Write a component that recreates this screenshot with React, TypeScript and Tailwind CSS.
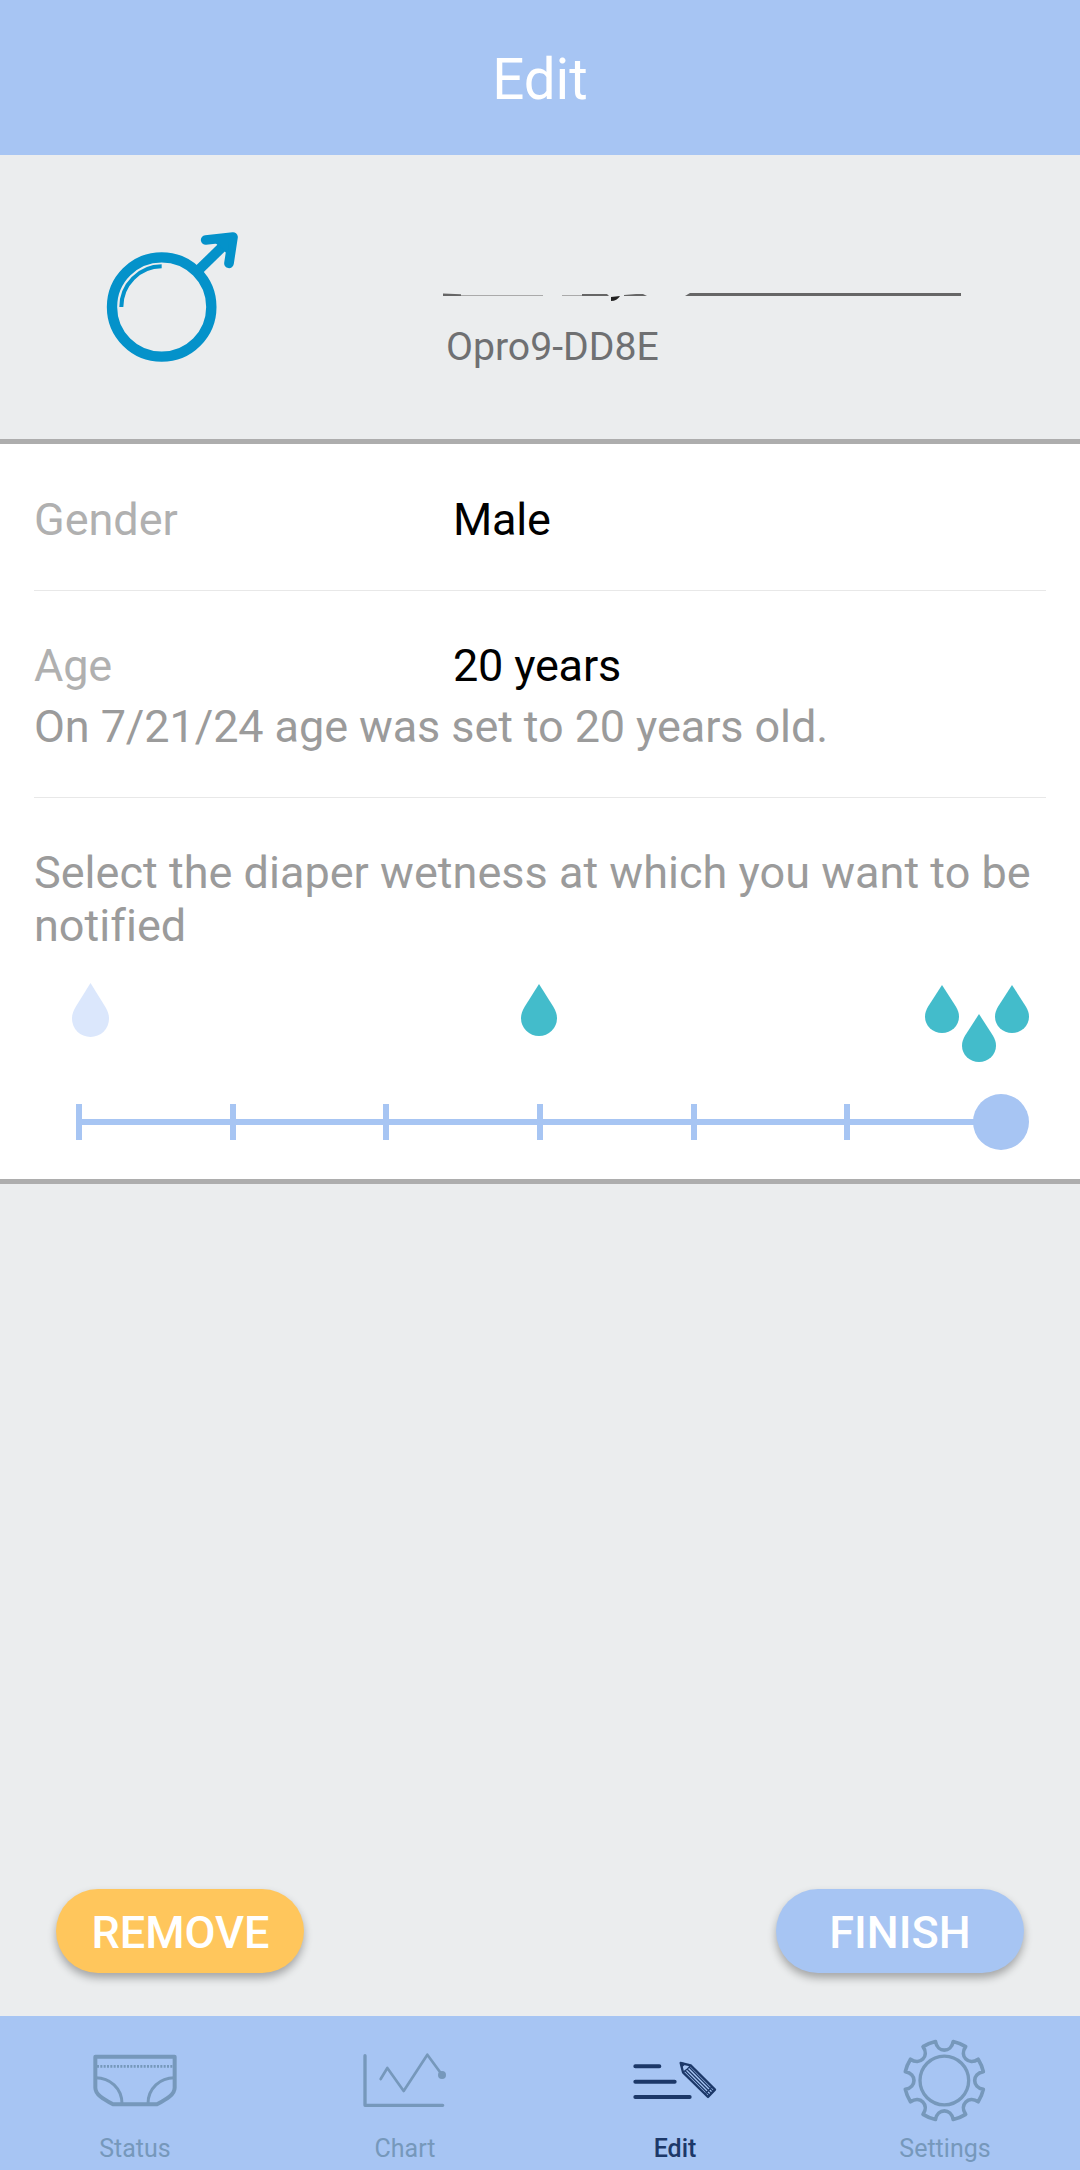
const DROP = "M18 0 L32.5 23.5 C35 28 36 31 36 35 A18 18 0 0 1 0 35 C0 31 1 28 3.5 23.5 Z";

const TICKS = [76, 230, 383, 537, 691, 844];

function gearPath() {
  const cx = 1033;
  const cy = 212.5;
  const r = 120;
  const pt = (deg: number, radius = r) => {
    const a = (deg * Math.PI) / 180;
    return `${(cx + radius * Math.sin(a)).toFixed(1)} ${(cy - radius * Math.cos(a)).toFixed(1)}`;
  };
  let d = `M${pt(12.8)}`;
  for (let i = 1; i <= 8; i++) {
    const mid = i * 45;
    d += ` A${r} ${r} 0 0 1 ${pt(mid - 12.8)}`;
    d += ` C${pt(mid - 14, 85)} ${pt(mid + 14, 85)} ${pt(mid + 12.8)}`;
  }
  return d + " Z";
}

function MaleIcon() {
  return (
    <svg width="140" height="140" viewBox="75 60 420 420" fill="none" stroke="#0492ca">
      <circle cx="245" cy="291" r="149" strokeWidth="31" />
      <path d="M124 291 A122 122 0 0 1 245 169" strokeWidth="12" />
      <path d="M357 179 L440 98" strokeWidth="30" />
      <path d="M377 90 L459 81 L447 160" strokeWidth="29" strokeLinecap="round" strokeLinejoin="round" />
      <path d="M408 98 H443 V130 Z" fill="#0492ca" strokeWidth="4" />
    </svg>
  );
}

function NameLine() {
  return (
    <svg width="520" height="10" viewBox="442 292 520 10" className="mt-[137px]">
      <path d="M443 293.5 L461 294.3 V296 H443 Z" fill="#666" />
      <path d="M461 295 H543 V296 H461 Z M562 295 H582 V296 H562 Z" fill="#aaa" />
      <path d="M582 294 H607 L609 296 H582 Z M624 295 L636 294 H643 L647 296 H624 Z" fill="#666" />
      <path d="M611 297 L620 296 Q617 301 611 301 Z" fill="#222" />
      <path d="M690 293 H961 V296 H685 Z" fill="#666" />
    </svg>
  );
}

function Drop({ className, color }: { className: string; color: string }) {
  return (
    <svg viewBox="0 0 36 53" preserveAspectRatio="none" className={className} fill={color}>
      <path d={DROP} />
    </svg>
  );
}

function WetnessSlider() {
  return (
    <svg width="1080" height="60" viewBox="0 1092 1080 60" fill="#a7c5f3" className="block">
      <rect x="76" y="1119" width="925" height="6" />
      {TICKS.map((x) => (
        <rect key={x} x={x} y="1104" width="6" height="36" />
      ))}
      <circle cx="1001" cy="1122" r="28" />
    </svg>
  );
}

function StatusIcon() {
  return (
    <svg width="84" height="84" viewBox="100 88 252 252" fill="none" stroke="currentColor">
      <path d="M107 141 H345 V234 C345 254 322 268 292 284 H160 C130 268 107 254 107 234 Z" strokeWidth="12" strokeLinejoin="round" />
      <path d="M112 170 H342" strokeWidth="8" strokeDasharray="6 4" />
      <path d="M108 204 C150 204 187 235 187 282 M344 204 C302 204 265 235 265 282" strokeWidth="9" />
    </svg>
  );
}

function ChartIcon() {
  return (
    <svg width="84" height="84" viewBox="910 88 252 252" fill="none" stroke="currentColor" strokeLinecap="round" strokeLinejoin="round">
      <path d="M916 138 V287 H1149" strokeWidth="10" />
      <path d="M963 208 L983 175 L1032 244 L1103 135 L1147 195" strokeWidth="8" />
      <circle cx="1147" cy="196" r="12" fill="currentColor" stroke="none" />
    </svg>
  );
}

function EditIcon() {
  return (
    <svg width="84" height="84" viewBox="100 88 252 252" fill="none" stroke="currentColor" strokeLinecap="round" strokeLinejoin="round">
      <path d="M107 170 H179 M107 216 H225 M107 262 H270" strokeWidth="12" />
      <path d="M243 160 L273 167 L346 240 L325 262 L250 188 Z" strokeWidth="7" />
      <path d="M250 188 L262 179 L273 167 M257 184 L329 256 M263 179 L334 250 M269 173 L340 245 M317 252 L337 231" strokeWidth="4" />
      <path d="M243 160 L255 163 L246 171 Z" strokeWidth="4" fill="currentColor" />
    </svg>
  );
}

function SettingsIcon() {
  return (
    <svg width="84" height="84" viewBox="909 88 252 252" fill="none" stroke="currentColor" strokeLinejoin="round">
      <path d={gearPath()} strokeWidth="11" />
      <circle cx="1033" cy="212.5" r="73" strokeWidth="10" />
    </svg>
  );
}

const tabs = [
  { label: "Status", icon: <StatusIcon /> },
  { label: "Chart", icon: <ChartIcon /> },
  { label: "Edit", icon: <EditIcon />, active: true },
  { label: "Settings", icon: <SettingsIcon /> },
];

export default function App() {
  return (
    <div className="flex h-[2170px] w-[1080px] flex-col overflow-hidden bg-[#ebedee] font-['Roboto',sans-serif] text-[45px] leading-[53px]">
      <header className="flex h-[155px] items-center justify-center bg-[#a7c5f3] pt-1.5 text-[56.5px] text-white">
        Edit
      </header>

      <section className="flex h-[289px] border-b-[5px] border-[#adadad]">
        <div className="w-[442px] pt-[75px] pl-[105px]">
          <MaleIcon />
        </div>
        <div className="flex flex-col">
          <NameLine />
          <p className="mt-[21px] ml-[4px] text-[39.2px] leading-[48px] text-[#6f7072]">Opro9-DD8E</p>
        </div>
      </section>

      <section className="flex h-[740px] flex-col border-b-[5px] border-[#adadad] bg-white">
        <div className="mx-[34px] flex h-[147px] border-b border-[#e8e8e8] pt-[49px]">
          <span className="w-[419px] text-[#b0b0b0]">Gender</span>
          <span className="tracking-[-0.2px] text-black">Male</span>
        </div>
        <div className="mx-[34px] h-[207px] border-b border-[#e8e8e8] pt-[48px]">
          <div className="flex tracking-[-0.2px]">
            <span className="w-[419px] text-[#b0b0b0]">Age</span>
            <span className="text-black">20 years</span>
          </div>
          <p className="mt-[8px] tracking-[-0.1px] text-[#9b9b9b]">On 7/21/24 age was set to 20 years old.</p>
        </div>
        <p className="mx-[34px] mt-[48px] h-[106px] tracking-[0.02px] text-[#9b9b9b]">
          Select the diaper wetness at which you want to be notified
        </p>
        <div className="mt-[31px] flex h-[80px] items-start pl-[72px]">
          <Drop className="h-[54px] w-[37px]" color="#dbe7fc" />
          <Drop className="mt-px ml-[412px] h-[52px] w-[36px]" color="#43bccb" />
          <div className="ml-[368px] flex pt-0.5">
            <Drop className="h-[48px] w-[34px]" color="#43bccb" />
            <Drop className="mt-[29px] ml-[3px] h-[48px] w-[34px]" color="#43bccb" />
            <Drop className="-ml-px h-[48px] w-[34px]" color="#43bccb" />
          </div>
        </div>
        <div className="mt-[29px]">
          <WetnessSlider />
        </div>
      </section>

      <main className="flex flex-1 items-end justify-between px-[56px] pb-[43px] font-medium text-white">
        <button className="h-[84px] w-[248px] rounded-full bg-[#ffc65c] pt-0.5 pl-px shadow-[0_5px_9px_rgba(0,0,0,0.3)]">REMOVE</button>
        <button className="h-[84px] w-[248px] rounded-full bg-[#a7c5f3] pt-0.5 shadow-[0_5px_9px_rgba(0,0,0,0.3)]">FINISH</button>
      </main>

      <nav className="grid h-[154px] grid-cols-4 bg-[#a7c5f3] pt-[23px] text-[25px] leading-[30px]">
        {tabs.map((tab) => (
          <div key={tab.label} className={`flex flex-col items-center ${tab.active ? "text-[#1c3868]" : "text-[#7698bb]"}`}>
            {tab.icon}
            <span className={tab.active ? "mt-[11px] font-medium" : "mt-[11px]"}>{tab.label}</span>
          </div>
        ))}
      </nav>
    </div>
  );
}
